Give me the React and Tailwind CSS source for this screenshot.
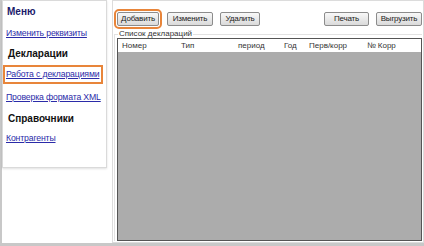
// ─── DECLARATIONS SCREEN ──────────────────────────────────────────────────────

const COLUMNS = [
  { label: "Номер", width: "w-[59px]" },
  { label: "Тип", width: "w-[57px]" },
  { label: "период", width: "w-[46px]" },
  { label: "Год", width: "w-[25px]" },
  { label: "Перв/корр", width: "w-[58px]" },
  { label: "№ Корр", width: "flex-1" },
];

function NavLink({ children, className = "" }) {
  return (
    <a
      href="#"
      className={`whitespace-nowrap text-[8.7px] tracking-[-0.15px] leading-none text-[#2b2ba8] underline underline-offset-[1px] ${className}`}
    >
      {children}
    </a>
  );
}

function SectionTitle({ children }) {
  return (
    <p className="whitespace-nowrap text-[10px] font-bold leading-none text-[#111]">{children}</p>
  );
}

function ToolButton({ children, width, highlighted = false }) {
  return (
    <button
      className={`${width} h-[14px] rounded-[2px] border border-[#8c8c8c] bg-gradient-to-b from-[#f8f8f8] to-[#dadada] text-[8px] tracking-[-0.2px] leading-none text-[#222] ${
        highlighted ? "outline-2 outline-offset-[1px] outline-[#e8853a]" : ""
      }`}
    >
      {children}
    </button>
  );
}

function Sidebar() {
  return (
    <aside className="w-[105px] h-[168px] border border-[#dadada] shadow-[0_1px_2px_rgba(0,0,0,0.12)] flex flex-col">
      <div className="h-[20px] flex items-end pl-[4px] pb-[4px]">
        <p className="text-[10px] font-bold leading-none text-[#1b1b6b]">Меню</p>
      </div>
      <div className="h-[24px] flex items-center pl-[3px]">
        <NavLink>Изменить реквизиты</NavLink>
      </div>
      <div className="h-[18px] flex items-center pl-[5px]">
        <SectionTitle>Декларации</SectionTitle>
      </div>
      <div className="mt-[2px] w-[100px] h-[19px] border-2 border-[#e8853a] flex items-center pl-[1px]">
        <NavLink>Работа с декларациями</NavLink>
      </div>
      <div className="h-[26px] flex items-center pl-[3px]">
        <NavLink>Проверка формата XML</NavLink>
      </div>
      <div className="h-[18px] flex items-center pl-[5px]">
        <SectionTitle>Справочники</SectionTitle>
      </div>
      <div className="h-[20px] flex items-center pl-[3px]">
        <NavLink>Контрагенты</NavLink>
      </div>
    </aside>
  );
}

function DeclarationList() {
  return (
    <fieldset className="flex-1 flex flex-col border-t border-l border-[#e2e2e2] ml-[1px] min-h-0">
      <legend className="ml-[3px] px-[1px] text-[8px] leading-none text-[#333]">Список деклараций</legend>
      <div className="ml-[2px] flex-1 flex flex-col border border-[#555] bg-[#acacac]">
        <div className="h-[13px] bg-white flex items-center">
          {COLUMNS.map((c) => (
            <span key={c.label} className={`${c.width} pl-[4px] text-[8px] leading-none text-[#333]`}>
              {c.label}
            </span>
          ))}
        </div>
      </div>
    </fieldset>
  );
}

export default function App() {
  return (
    <div className="w-[424px] h-[246px] bg-white flex gap-[5px] border-l-2 border-b-[3px] border-[#c8c8c8] font-['Liberation_Sans',Arial,sans-serif]">
      <Sidebar />
      <main className="w-[312px] h-[243px] border border-[#dcdcdc] flex flex-col pt-[11px] pr-[1px] pb-[1px]">
        <div className="h-[14px] flex items-center pl-[4px]">
          <ToolButton width="w-[42px]" highlighted>Добавить</ToolButton>
          <div className="ml-[8px] flex">
            <ToolButton width="w-[46px]">Изменить</ToolButton>
          </div>
          <div className="ml-[7px] flex">
            <ToolButton width="w-[40px]">Удалить</ToolButton>
          </div>
          <div className="ml-auto flex gap-[7px]">
            <ToolButton width="w-[45px]">Печать</ToolButton>
            <ToolButton width="w-[46px]">Выгрузить</ToolButton>
          </div>
        </div>
        <div className="mt-[4px] flex-1 flex flex-col min-h-0">
          <DeclarationList />
        </div>
      </main>
    </div>
  );
}
